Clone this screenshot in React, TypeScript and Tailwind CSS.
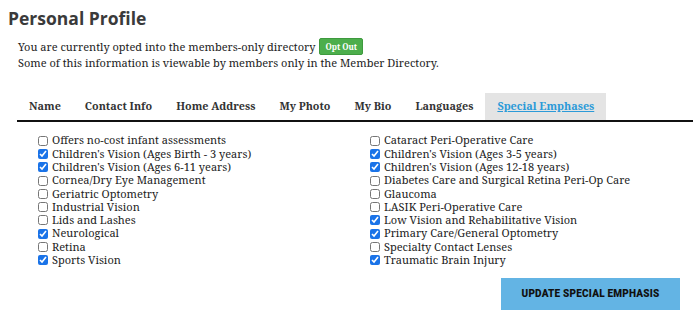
import React from 'react';

const left = [
  { label: 'Offers no-cost infant assessments', checked: false },
  { label: "Children's Vision (Ages Birth - 3 years)", checked: true },
  { label: "Children's Vision (Ages 6-11 years)", checked: true },
  { label: 'Cornea/Dry Eye Management', checked: false },
  { label: 'Geriatric Optometry', checked: false },
  { label: 'Industrial Vision', checked: false },
  { label: 'Lids and Lashes', checked: false },
  { label: 'Neurological', checked: true },
  { label: 'Retina', checked: false },
  { label: 'Sports Vision', checked: true },
];

const right = [
  { label: 'Cataract Peri-Operative Care', checked: false },
  { label: "Children's Vision (Ages 3-5 years)", checked: true },
  { label: "Children's Vision (Ages 12-18 years)", checked: true },
  { label: 'Diabetes Care and Surgical Retina Peri-Op Care', checked: false },
  { label: 'Glaucoma', checked: false },
  { label: 'LASIK Peri-Operative Care', checked: false },
  { label: 'Low Vision and Rehabilitative Vision', checked: true },
  { label: 'Primary Care/General Optometry', checked: true },
  { label: 'Specialty Contact Lenses', checked: false },
  { label: 'Traumatic Brain Injury', checked: true },
];

const tabs = ['Name', 'Contact Info', 'Home Address', 'My Photo', 'My Bio', 'Languages', 'Special Emphases'];

function Check({ label, checked }: { label: string; checked: boolean }) {
  return (
    <label className="flex items-center h-[13.3px]">
      <input
        type="checkbox"
        defaultChecked={checked}
        className="w-[10px] h-[10px] m-0 mr-[4px] accent-[#1a73e8]"
      />
      <span>{label}</span>
    </label>
  );
}

export default function App() {
  return (
    <div className="w-[697px] h-[318px] bg-white text-[#222] font-['Noto_Serif','DejaVu_Serif',serif] text-[11px] overflow-hidden">
      <h1 className="pl-[8px] pt-[5px] font-['Open_Sans',sans-serif] font-bold text-[17.5px] leading-[26px] text-[#3a3a3a]">
        Personal Profile
      </h1>

      {/* Directory notice */}
      <div className="pl-[18px] pt-[7px] leading-[16px]">
        <div className="flex items-center">
          You are currently opted into the members-only directory
          <button className="ml-[4px] h-[17px] px-[5px] bg-[#4cae4c] text-white text-[8px] font-bold rounded-[2px] border border-[#3e9a3e]">
            Opt Out
          </button>
        </div>
        <div>Some of this information is viewable by members only in the Member Directory.</div>
      </div>

      {/* Tabs */}
      <div className="mt-[22px] ml-[17px] mr-[4px] flex border-b-2 border-[#111] font-bold text-[10.8px]">
        {tabs.map((t) => (
          <div
            key={t}
            className={`h-[27px] px-[12px] flex items-center ${
              t === 'Special Emphases' ? 'bg-[#e4e4e4] text-[#2b9ad8] underline' : 'text-[#333]'
            }`}
          >
            {t}
          </div>
        ))}
      </div>

      {/* Checkboxes */}
      <div className="mt-[12px] grid grid-cols-[332px_1fr] pl-[38px]">
        <div className="flex flex-col">
          {left.map((c) => (
            <Check key={c.label} {...c} />
          ))}
        </div>
        <div className="flex flex-col">
          {right.map((c) => (
            <Check key={c.label} {...c} />
          ))}
        </div>
      </div>

      <div className="flex justify-end pr-[17px] mt-[11px]">
        <button className="w-[179px] h-[32px] bg-[#63b4e4] font-['Roboto',sans-serif] font-black text-[10px] text-[#111] tracking-[0.2px]">
          UPDATE SPECIAL EMPHASIS
        </button>
      </div>
    </div>
  );
}
